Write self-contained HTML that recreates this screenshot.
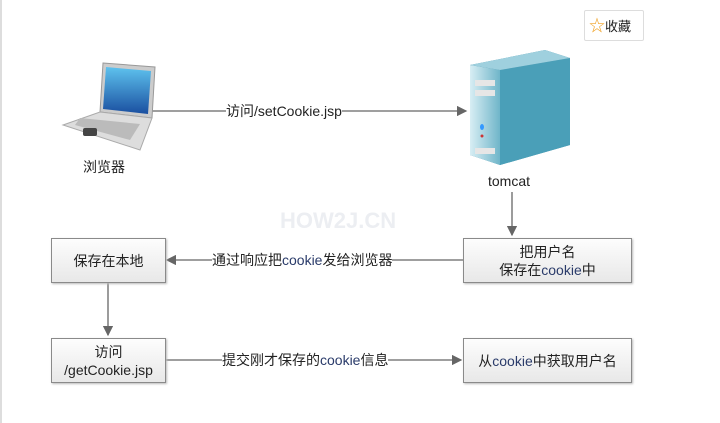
<!DOCTYPE html>
<html><head><meta charset="utf-8"><style>
body{margin:0;width:720px;height:423px;background:#fff;position:relative;overflow:hidden;font-family:"Liberation Sans","Noto Sans CJK SC",sans-serif;color:#222}
.b{position:absolute;border:1px solid #8a8a8a;background:linear-gradient(#fdfdfd,#e8e8e8);box-shadow:1px 1px 2px #bbb;display:flex;flex-direction:column;align-items:center;justify-content:center;text-align:center;font-size:14px;line-height:18px}
.b div{white-space:nowrap}
.t{position:absolute;font-size:14px;background:#fff;white-space:nowrap;line-height:16px}
.c{color:#2a3b6a}
</style></head><body>
<div style="position:absolute;left:0;top:0;width:2px;height:423px;background:#ddd"></div>
<div style="position:absolute;left:584px;top:10px;width:60px;height:31px;border:1px solid #ddd;border-radius:2px;font-size:13px;line-height:31px;box-sizing:border-box;padding-left:4px"><span style="color:#f0a020;font-size:16px">☆</span>收藏</div>
<svg style="position:absolute;left:0;top:0" width="720" height="423">
<defs><marker id="a" markerWidth="8" markerHeight="8" refX="7" refY="4" orient="auto"><path d="M0,0 L8,4 L0,8 Z" fill="#666"/></marker>
<linearGradient id="s" x1="0" x2="1"><stop offset="0" stop-color="#d8eef4"/><stop offset="1" stop-color="#6fb5c9"/></linearGradient>
<linearGradient id="sc" x1="0" y1="0" x2="0" y2="1"><stop offset="0" stop-color="#5ec2ee"/><stop offset="1" stop-color="#1a4fa0"/></linearGradient></defs>
<g stroke="#666" stroke-width="1.3" fill="none">
<line x1="125" y1="111" x2="466" y2="111" marker-end="url(#a)"/>
<line x1="512" y1="192" x2="512" y2="235" marker-end="url(#a)"/>
<line x1="463" y1="260" x2="167" y2="260" marker-end="url(#a)"/>
<line x1="108" y1="282" x2="108" y2="335" marker-end="url(#a)"/>
<line x1="166" y1="360" x2="461" y2="360" marker-end="url(#a)"/>
</g>
<path d="M103,63 L155,67 L152,118 L100,112 Z" fill="#ccc" stroke="#999"/>
<path d="M106,67 L151,71 L148,114 L103,109 Z" fill="url(#sc)"/>
<path d="M100,112 L152,118 L140,150 L63,125 Z" fill="#ddd" stroke="#aaa"/>
<path d="M80,118 L140,124 L130,140 L75,125 Z" fill="#bbb"/>
<rect x="83" y="128" width="14" height="8" rx="2" fill="#444"/>
<path d="M470,65 L545,50 L570,58 L570,145 L500,165 L470,155 Z" fill="#3a8aa3"/>
<path d="M470,65 L500,70 L500,165 L470,155 Z" fill="url(#s)"/>
<path d="M500,70 L570,58 L570,145 L500,165 Z" fill="#4a9fb8"/>
<path d="M470,65 L500,70 L570,58 L545,50 Z" fill="#9fd0de"/>
<rect x="475" y="80" width="20" height="6" fill="#e6e6e6"/><rect x="475" y="90" width="20" height="6" fill="#e6e6e6"/>
<rect x="475" y="148" width="20" height="6" fill="#e6e6e6"/>
<ellipse cx="482" cy="127" rx="2" ry="3" fill="#39f"/><circle cx="482" cy="136" r="1.5" fill="#c33"/>
<text x="280" y="228" font-family="Liberation Sans" font-weight="bold" font-size="22" fill="#eceef2">HOW2J.CN</text>
</svg>
<div class="t" style="left:226px;top:103px">访问/setCookie.jsp</div>
<div class="t" style="left:83px;top:159px;background:none">浏览器</div>
<div class="t" style="left:488px;top:173px;background:none">tomcat</div>
<div class="b" style="left:51px;top:238px;width:113px;height:43px"><div>保存在本地</div></div>
<div class="b" style="left:463px;top:238px;width:167px;height:43px"><div>把用户名</div><div>保存在<span class="c">cookie</span>中</div></div>
<div class="t" style="left:212px;top:252px">通过响应把<span class="c">cookie</span>发给浏览器</div>
<div class="b" style="left:51px;top:338px;width:113px;height:43px"><div>访问</div><div>/getCookie.jsp</div></div>
<div class="t" style="left:222px;top:352px">提交刚才保存的<span class="c">cookie</span>信息</div>
<div class="b" style="left:463px;top:338px;width:167px;height:43px"><div>从<span class="c">cookie</span>中获取用户名</div></div>
</body></html>
